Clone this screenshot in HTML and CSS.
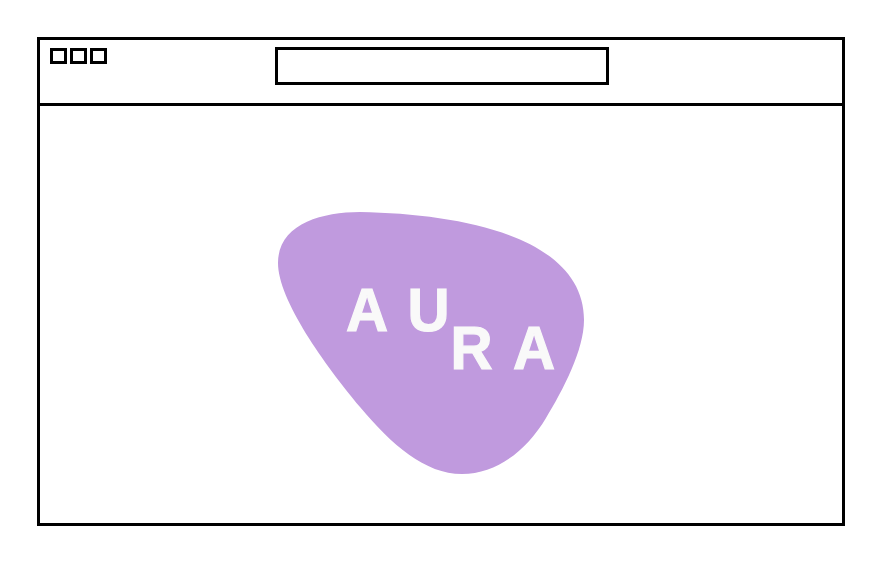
FILE: index.html
```html
<!DOCTYPE html>
<html lang="en">

<head>
    <meta charset="UTF-8">
    <meta name="viewport" content="width=device-width, initial-scale=1.0">
    <title>Aura</title>
    <link rel="stylesheet" href="styles.css">
</head>

<body>

    <div id="browser">
        <div id="toolbar">
            <div id="buttons">
                <span class="button"></span>
                <span class="button"></span>
                <span class="button"></span>
            </div>
            <div id="address"></div>
        </div>

        <div id="content">
            <svg id="logo" viewBox="40 106 802 417" xmlns="http://www.w3.org/2000/svg">
                <path class="blob" d="M360 212 C470 214 584 240 584 320 C584 350 563 390 546 418 C527 450 497 474 462 474 C425 474 392 445 360 407 C325 365 278 300 278 263 C278 225 320 212 360 212 Z"></path>
                <text class="letter" transform="translate(346 331) scale(.94 1)">A</text>
                <text class="letter" transform="translate(407.500 331) scale(.94 1)">U</text>
                <text class="letter" transform="translate(450.500 369) scale(.94 1)">R</text>
                <text class="letter" transform="translate(513 369) scale(.94 1)">A</text>
            </svg>
        </div>
    </div>

</body>

</html>
```

FILE: styles.css
```css
* {
    box-sizing: border-box;
}

body {
    margin: 0;
    padding: 37px 0 0 37px;
    background: white;
}

#browser {
    width: 808px;
    height: 489px;
    border: 3px solid black;
}

#toolbar {
    display: flex;
    height: 66px;
    border-bottom: 3px solid black;
}

#buttons {
    display: flex;
    gap: 3px;
    width: 235px;
    padding: 8px 0 0 10px;
}

.button {
    width: 17px;
    height: 16px;
    border: 3px solid black;
}

#address {
    width: 334px;
    height: 38px;
    margin-top: 7px;
    border: 3px solid black;
}

#content {
    height: 417px;
}

#logo {
    display: block;
    width: 100%;
    height: 100%;
}

.blob {
    fill: #c09ade;
}

.letter {
    fill: #f9f9f9;
    stroke: #f9f9f9;
    stroke-width: 1.2px;
    font-family: "Liberation Sans", Arial, sans-serif;
    font-size: 62px;
    font-weight: 700;
}
```
